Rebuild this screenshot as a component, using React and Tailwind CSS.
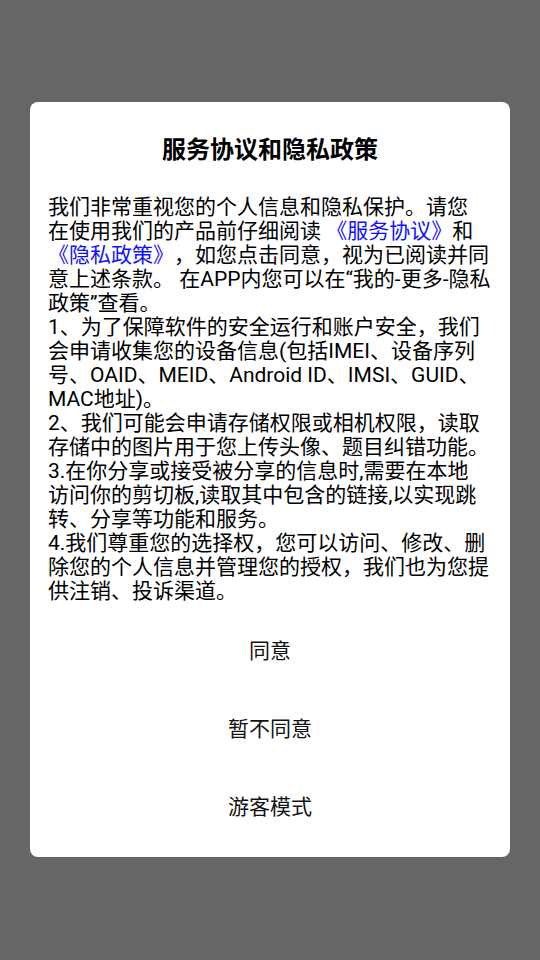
export default function App() {
  const font = { fontFamily: "Roboto, 'Noto Sans CJK SC', sans-serif" };
  const lines = [
    "我们非常重视您的个人信息和隐私保护。请您",
    null,
    null,
    "意上述条款。 在APP内您可以在“我的-更多-隐私",
    "政策”查看。",
    "1、为了保障软件的安全运行和账户安全，我们",
    "会申请收集您的设备信息(包括IMEI、设备序列",
    "号、OAID、MEID、Android ID、IMSI、GUID、",
    "MAC地址)。",
    "2、我们可能会申请存储权限或相机权限，读取",
    "存储中的图片用于您上传头像、题目纠错功能。",
    "3.在你分享或接受被分享的信息时,需要在本地",
    "访问你的剪切板,读取其中包含的链接,以实现跳",
    "转、分享等功能和服务。",
    "4.我们尊重您的选择权，您可以访问、修改、删",
    "除您的个人信息并管理您的授权，我们也为您提",
    "供注销、投诉渠道。",
  ];
  return (
    <div className="w-[540px] h-[960px] bg-[#666666] flex flex-col pt-[102px] px-[30px]" style={font}>
      <div className="bg-white rounded-[8px] h-[755px] flex flex-col pt-[32px] pb-[10px]">
        <div className="text-center text-[24px] leading-[32px] font-bold text-black">
          服务协议和隐私政策
        </div>
        <div className="mt-[29px] px-[18px] text-[21px] leading-[24px] text-black [text-spacing-trim:space-all]">
          {lines.map((l, i) => {
            if (i === 1)
              return (
                <div key={i} className="whitespace-pre">
                  在使用我们的产品前仔细阅读 <span className="text-[#1010ff]">《服务协议》</span>和
                </div>
              );
            if (i === 2)
              return (
                <div key={i} className="whitespace-pre">
                  <span className="text-[#1010ff]">《隐私政策》</span>，如您点击同意，视为已阅读并同
                </div>
              );
            return (
              <div key={i} className="whitespace-pre">
                {l}
              </div>
            );
          })}
        </div>
        <div className="mt-[10px] flex flex-col">
          {["同意", "暂不同意", "游客模式"].map((t) => (
            <div key={t} className="h-[78px] flex items-center justify-center text-[21px] text-[#111111]">
              {t}
            </div>
          ))}
        </div>
      </div>
    </div>
  );
}
